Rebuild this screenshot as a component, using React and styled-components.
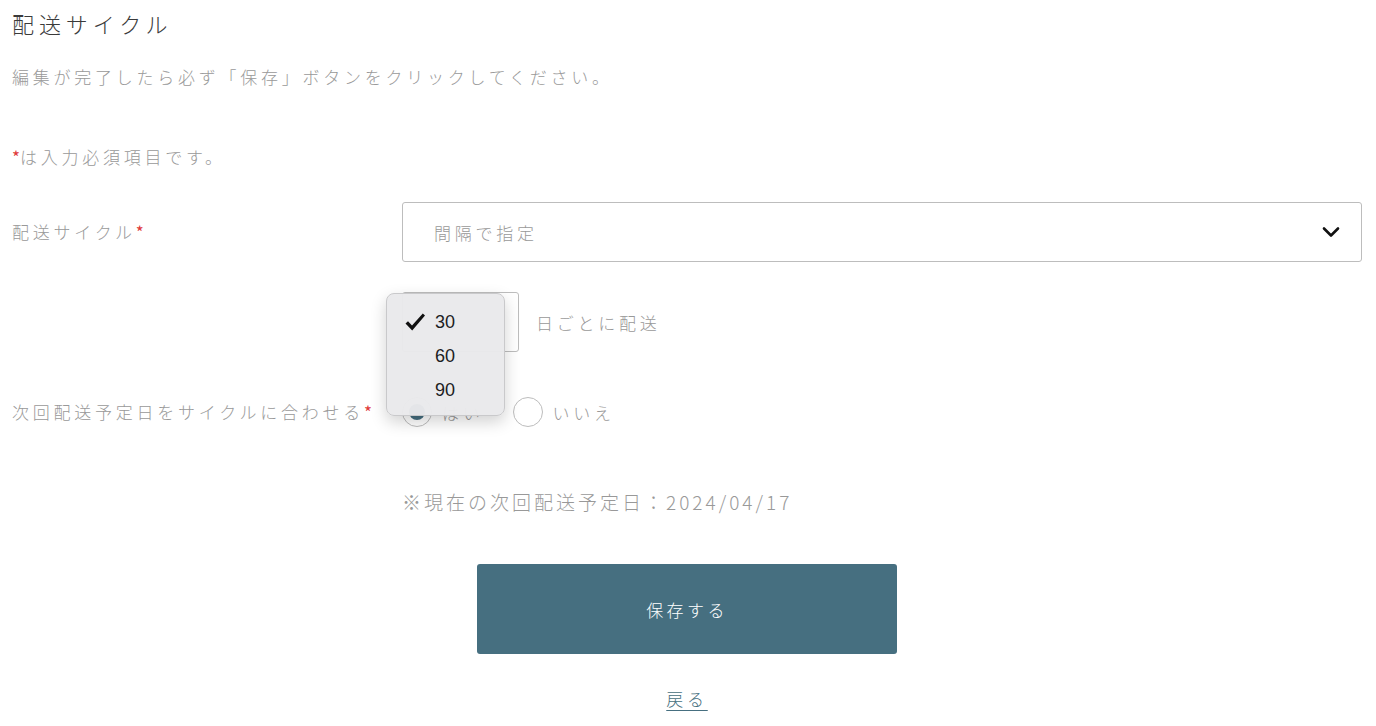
import React from "react";
import styled, { createGlobalStyle } from "styled-components";

const GlobalStyle = createGlobalStyle`
  html, body { margin: 0; padding: 0; background: #fff; }
  body {
    font-family: "Noto Sans CJK JP", "Noto Sans", sans-serif;
    font-weight: 300;
    color: #999;
  }
  * { box-sizing: border-box; }
`;

const Page = styled.div`
  width: 1376px;
  padding: 8px 14px 0 12px;
  display: flex;
  flex-direction: column;
`;

const Title = styled.h1`
  margin: 0;
  font-size: 22px;
  line-height: 30px;
  font-weight: 300;
  letter-spacing: 4.9px;
  color: #3a3a3a;
`;

const Text = styled.p`
  margin: ${(p) => p.$mt || 0}px 0 0;
  font-size: 17px;
  line-height: 30px;
  letter-spacing: 3.75px;
  color: #999;
`;

const Req = styled.span`
  color: #e03a3a;
  letter-spacing: 0;
  font-weight: 400;
`;

const Form = styled.div`
  margin-top: 30px;
  display: flex;
  flex-direction: column;
  gap: 30px;
`;

const Row = styled.div`
  display: grid;
  grid-template-columns: 390px 1fr;
  align-items: center;
  min-height: 60px;
`;

const Label = styled.div`
  font-size: 17px;
  line-height: 30px;
  letter-spacing: 3.75px;
  color: #999;
`;

const Field = styled.div`
  display: flex;
  align-items: center;
  position: relative;
`;

const SelectBox = styled.div`
  width: ${(p) => p.$w || "100%"};
  height: 60px;
  border: 1px solid #bdbdbd;
  border-radius: 3px;
  display: flex;
  align-items: center;
  justify-content: space-between;
  padding: 0 21px 0 31px;
  font-size: 17px;
  letter-spacing: 3.75px;
  color: #999;
  background: #fff;
`;

const Suffix = styled.span`
  margin-left: 17px;
  font-size: 17px;
  letter-spacing: 3.75px;
  color: #999;
`;

const Popup = styled.div`
  position: absolute;
  left: -16px;
  top: 1px;
  width: 119px;
  height: 123px;
  background: rgba(233, 233, 235, 0.97);
  border: 1px solid #c9c9cb;
  border-radius: 8px;
  box-shadow: 0 6px 16px rgba(0, 0, 0, 0.18);
  padding: 11px 0 0;
  display: flex;
  flex-direction: column;
  z-index: 5;
`;

const Option = styled.div`
  height: 34px;
  display: flex;
  align-items: center;
  padding-left: 17px;
  font-family: "Liberation Sans", Arial, sans-serif;
  font-weight: 400;
  font-size: 18px;
  color: #1d1d1f;
`;

const CheckSlot = styled.span`
  width: 31px;
  display: inline-flex;
  align-items: center;
`;

const Radios = styled.div`
  display: flex;
  align-items: center;
`;

const RadioItem = styled.label`
  display: flex;
  align-items: center;
  margin-right: 29px;
  font-size: 17px;
  letter-spacing: 3.75px;
  color: #999;
`;

const RadioCircle = styled.span`
  width: 30px;
  height: 30px;
  border-radius: 50%;
  border: 1px solid #bdbdbd;
  background: #fff;
  margin-right: 10px;
  display: inline-flex;
  align-items: center;
  justify-content: center;
  &::after {
    content: "";
    width: 16px;
    height: 16px;
    border-radius: 50%;
    background: ${(p) => (p.$checked ? "#466f80" : "transparent")};
  }
`;

const Note = styled.div`
  font-size: 19px;
  line-height: 30px;
  letter-spacing: 3px;
  color: #999;
`;

const Actions = styled.div`
  margin-top: 32px;
  display: flex;
  flex-direction: column;
  align-items: center;
  width: 1350px;
`;

const SaveButton = styled.button`
  width: 420px;
  height: 90px;
  border: none;
  border-radius: 3px;
  background: #466f80;
  color: #fff;
  font-family: "Noto Sans CJK JP", "Noto Sans", sans-serif;
  font-weight: 300;
  font-size: 17px;
  letter-spacing: 3.4px;
  cursor: pointer;
`;

const BackLink = styled.a`
  margin-top: 30px;
  font-size: 17px;
  line-height: 30px;
  letter-spacing: 3.75px;
  color: #466f80;
  text-decoration: underline;
  text-underline-offset: 4px;
`;

const Chevron = () => (
  <svg width="18" height="12" viewBox="0 0 18 12">
    <polyline points="2,2.5 9,9.5 16,2.5" fill="none" stroke="#111" strokeWidth="2.6" strokeLinecap="round" strokeLinejoin="round" />
  </svg>
);

const Check = () => (
  <svg width="22" height="20" viewBox="0 0 22 20">
    <path d="M1.5 11.5 L4 9.2 L8 13.6 L18.8 1.5 L21 3.6 L8.2 18.6 Z" fill="#111" />
  </svg>
);

export default function App() {
  return (
    <>
      <GlobalStyle />
      <Page>
        <Title>配送サイクル</Title>
        <Text $mt={24}>編集が完了したら必ず「保存」ボタンをクリックしてください。</Text>
        <Text $mt={50}>
          <Req>*</Req>は入力必須項目です。
        </Text>
        <Form>
          <Row>
            <Label>
              配送サイクル<Req>*</Req>
            </Label>
            <Field>
              <SelectBox>
                <span>間隔で指定</span>
                <Chevron />
              </SelectBox>
            </Field>
          </Row>
          <Row>
            <div />
            <Field>
              <SelectBox $w="117px">
                <span>30</span>
              </SelectBox>
              <Suffix>日ごとに配送</Suffix>
              <Popup>
                <Option>
                  <CheckSlot>
                    <Check />
                  </CheckSlot>
                  30
                </Option>
                <Option>
                  <CheckSlot />
                  60
                </Option>
                <Option>
                  <CheckSlot />
                  90
                </Option>
              </Popup>
            </Field>
          </Row>
          <Row>
            <Label>
              次回配送予定日をサイクルに合わせる<Req>*</Req>
            </Label>
            <Radios>
              <RadioItem>
                <RadioCircle $checked />
                はい
              </RadioItem>
              <RadioItem>
                <RadioCircle />
                いいえ
              </RadioItem>
            </Radios>
          </Row>
          <Row>
            <div />
            <Note>※現在の次回配送予定日：2024/04/17</Note>
          </Row>
        </Form>
        <Actions>
          <SaveButton>保存する</SaveButton>
          <BackLink href="#">戻る</BackLink>
        </Actions>
      </Page>
    </>
  );
}
